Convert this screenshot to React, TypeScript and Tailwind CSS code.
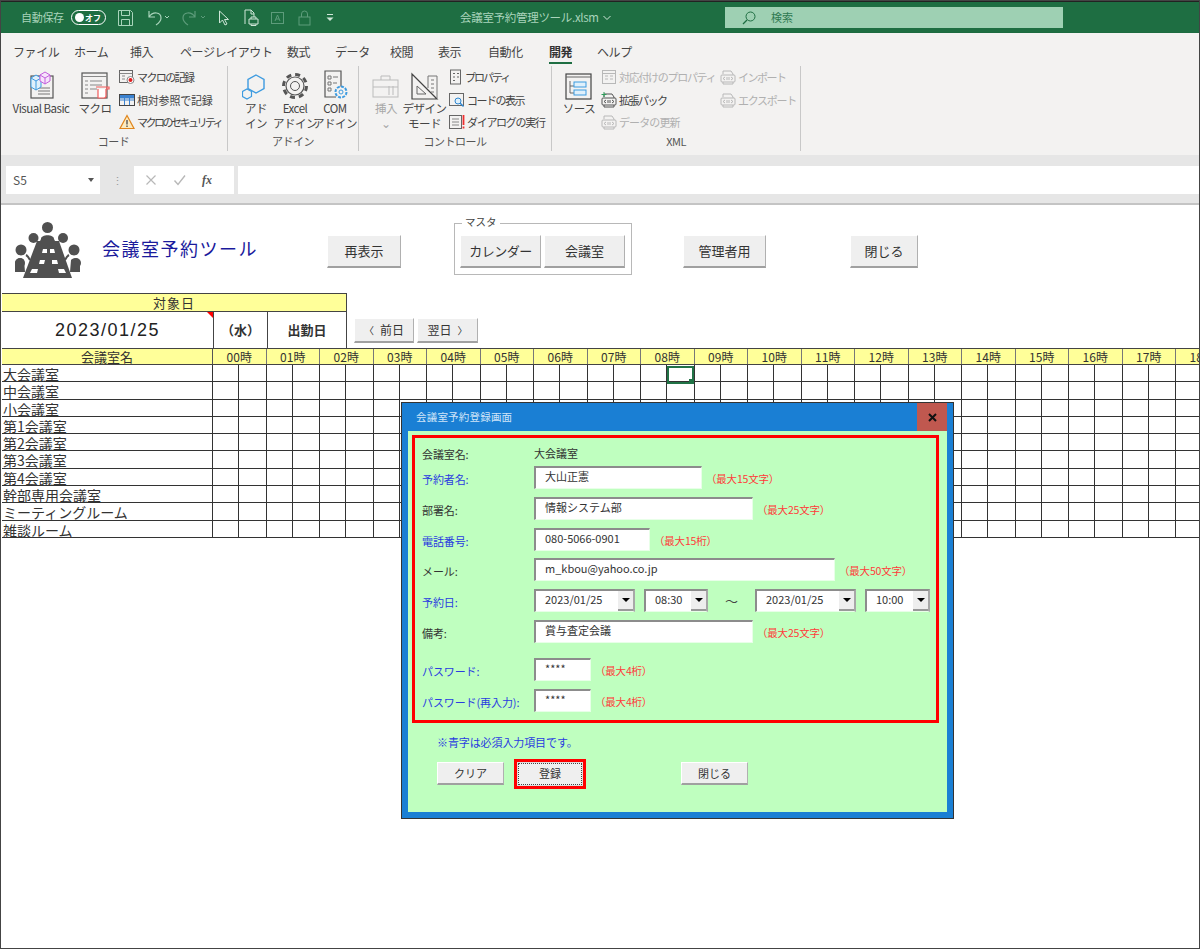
import { ReactNode } from "react";

const rooms = ["大会議室", "中会議室", "小会議室", "第1会議室", "第2会議室", "第3会議室", "第4会議室", "幹部専用会議室", "ミーティングルーム", "雑談ルーム"];
const hours = Array.from({ length: 19 }, (_, i) => String(i).padStart(2, "0") + "時");
const tabs = [
  ["ファイル", "w-[61px]"], ["ホーム", "w-[56px]"], ["挿入", "w-[50px]"], ["ページレイアウト", "w-[107px]"], ["数式", "w-[48px]"],
  ["データ", "w-[55px]"], ["校閲", "w-[48px]"], ["表示", "w-[50px]"], ["自動化", "w-[61px]"], ["開発", "w-[48px]"], ["ヘルプ", "w-[50px]"],
];

function Ico({ w = 28, h = 28, children }: { w?: number; h?: number; children: ReactNode }) {
  return (
    <svg width={w} height={h} viewBox={`0 0 ${w} ${h}`} fill="none" className="shrink-0">
      {children}
    </svg>
  );
}

function LargeBtn({ icon, lines, cls, dim }: { icon: ReactNode; lines: string[]; cls: string; dim?: boolean }) {
  return (
    <div className={`flex flex-col items-center ${cls}`}>
      <div className="flex h-[34px] items-end justify-center">{icon}</div>
      <div className={`mt-[1px] text-center text-[11.5px] leading-[15px] tracking-[-0.5px] whitespace-nowrap ${dim ? "text-[#a8a8a8]" : "text-[#444]"}`}>
        {lines.map((l) => <div key={l}>{l}</div>)}
      </div>
    </div>
  );
}

function SmallBtn({ icon, label, cls = "", dim }: { icon: ReactNode; label: string; cls?: string; dim?: boolean }) {
  return (
    <div className="flex h-[22.5px] items-center gap-[2px]">
      {icon}
      <span className={`text-[11px] whitespace-nowrap ${dim ? "text-[#b0b0b0]" : "text-[#444]"} ${cls}`}>{label}</span>
    </div>
  );
}

function Group({ label, cls, children }: { label: string; cls: string; children: ReactNode }) {
  return (
    <div className={`flex h-[85px] flex-col border-r border-[#c8c8c8] ${cls}`}>
      <div className="flex min-h-0 flex-1">{children}</div>
      <div className="h-[18px] text-center text-[11px] leading-[16px] tracking-[-0.5px] text-[#555]">{label}</div>
    </div>
  );
}

function SheetButton({ children, cls }: { children: ReactNode; cls: string }) {
  return (
    <div className={`flex items-center justify-center border-t border-l border-t-white border-l-white border-b-2 border-r border-b-[#a0a0a0] border-r-[#b0b0b0] bg-[#efefef] text-[#333] ${cls}`}>
      {children}
    </div>
  );
}

function DocIcon({ gray }: { gray?: boolean }) {
  const c = gray ? "#b8b8b8" : "#666";
  return (
    <Ico w={16} h={16}>
      <rect x="1.5" y="1.5" width="13" height="13" stroke={c} />
      <path d="M1.5 4.5h13M4 7h3M4 10h3M9 7h3M9 10h3" stroke={c} />
    </Ico>
  );
}

function XmlIcon({ gray, plus }: { gray?: boolean; plus?: boolean }) {
  const c = gray ? "#b8b8b8" : "#555";
  return (
    <Ico w={16} h={16}>
      <path d="M3 5V2h8l2 3v1M3 13v2h10v-2" stroke={c} />
      <rect x="1" y="6" width="14" height="7" rx="1" stroke={c} />
      <path d="M5 8l-2 1.5L5 11M11 8l2 1.5L11 11M7 8v3M9 8v3" stroke={c} />
      {plus && <path d="M3 0v5M0.5 2.5h5" stroke="#2f9e5b" />}
    </Ico>
  );
}

function RoomLogo() {
  const heads: [number, number, number][] = [[33.5, 5.5, 5.5], [19.5, 16, 5], [49, 16, 5], [7, 28, 5.5], [60, 28, 5.5], [6, 41, 5], [62, 41, 5]];
  return (
    <Ico w={67} h={58}>
      {heads.map(([x, y, r]) => <circle key={x} cx={x} cy={y} r={r} fill="#505050" />)}
      <path d="M1 41c0-4 6-6 9-3l1 12H1zM66 41c0-4-6-6-9-3l-1 12h10z" fill="#505050" />
      <path d="M27 17c0-5 13-5 13 0l1 2H26z" fill="#505050" />
      <path d="M12 33c2 1 3 3 4 5M55 33c-2 1-3 3-4 5" stroke="#505050" strokeWidth="2" />
      <path d="M23 19h22l13 37H9z" fill="#505050" />
      <path d="M29 27h4v4h-5zM36 27h4l1 4h-5zM26 38h5l-1 4h-5zM38 38h5l1 4h-6z" fill="#fff" />
      <path d="M18 47h6l-1 4h-7zM44 47h6l2 4h-7z" fill="#fff" />
    </Ico>
  );
}

function Combo({ value, cls }: { value: string; cls: string }) {
  return (
    <div className={`flex h-[23px] items-stretch border-t-2 border-l-2 border-t-[#8c8c8c] border-l-[#8c8c8c] border-r-2 border-r-[#a8a8a8] border-b border-b-[#e8ffe8] bg-white ${cls}`}>
      <div className="flex-1 pl-[9px] text-[11px] leading-[17px] text-[#333]">{value}</div>
      <div className="flex w-[15px] items-center justify-center border-b-2 border-b-[#999] bg-[#eeeeee]">
        <div className="h-0 w-0 border-x-[4px] border-t-[4px] border-x-transparent border-t-black" />
      </div>
    </div>
  );
}

function Label({ text, required }: { text: string; required?: boolean }) {
  return <div className={`w-[112px] pt-[3px] text-[11px] tracking-[-0.1px] whitespace-nowrap ${required ? "text-[#2a3ce0]" : "text-[#333]"}`}>{text}</div>;
}

function Input({ value, cls }: { value: string; cls: string }) {
  return (
    <div className={`h-[23px] border-t-2 border-l-2 border-t-[#8c8c8c] border-l-[#8c8c8c] border-r border-b border-r-[#e8ffe8] border-b-[#e8ffe8] bg-white pl-[9px] text-[11px] leading-[17px] text-[#333] ${cls}`}>
      {value}
    </div>
  );
}

function Field({ label, value, required, inputCls, hint, rowCls }: { label: string; value: string; required?: boolean; inputCls: string; hint: string; rowCls: string }) {
  return (
    <div className={`flex h-[23px] items-center ${rowCls}`}>
      <Label text={label} required={required} />
      <Input value={value} cls={inputCls} />
      <span className="ml-[4px] pt-[2px] text-[10.5px] tracking-[-0.2px] whitespace-nowrap text-[#ff3a3a]">{hint}</span>
    </div>
  );
}

export default function App() {
  return (
    <div className="relative h-[949px] w-[1200px] overflow-hidden bg-white outline outline-1 -outline-offset-1 outline-[#444] font-['Noto_Sans_CJK_JP','Liberation_Sans',sans-serif]">
      <div className="h-[2px] bg-[#222]" />

      {/* title bar */}
      <div className="flex h-[31px] items-center bg-[#1e6e42] pl-[21px]">
        <span className="w-[50px] text-[11px] tracking-[-0.3px] text-[#a9d4bb]">自動保存</span>
        <div className="flex h-[15px] w-[35px] items-center justify-between rounded-full border border-white pl-[3px] pr-[4px]">
          <div className="h-[9px] w-[9px] rounded-full bg-white" />
          <span className="text-[8px] font-bold text-white">オフ</span>
        </div>
        <div className="ml-[12px] flex items-center">
          <Ico w={15} h={16}>
            <path d="M.5.5h12l2 2v13H.5zM3.5.5v5h8v-5M3.5 15.500v-6h8v6" stroke="#a9d4bb" />
          </Ico>
          <div className="ml-[13px]">
            <Ico w={24} h={16}>
              <path d="M3 1v6h6M3 7c4-6 12-5 12 1 0 3-2 5-5 7" stroke="#a9d4bb" strokeWidth="1.2" />
              <path d="M19 6l2 2 2-2" stroke="#a9d4bb" />
            </Ico>
          </div>
          <div className="ml-[12px]">
            <Ico w={24} h={16}>
              <path d="M13 1v6H7M13 7C9 1 1 2 1 8c0 3 2 5 5 7" stroke="#5d9c7b" strokeWidth="1.2" />
              <path d="M19 6l2 2 2-2" stroke="#5d9c7b" />
            </Ico>
          </div>
          <div className="ml-[12px]">
            <Ico w={12} h={16}>
              <path d="M1.5 1v12l3-3 2.5 5 2-1-2.5-4.5h4z" stroke="#cfe6d8" />
            </Ico>
          </div>
          <div className="ml-[14px]">
            <Ico w={15} h={17}>
              <path d="M1 15V1h6l3 3v4M7 1v4h3" stroke="#cfe6d8" />
              <path d="M5 10h9v5H5zM7 10V8h5v2M7 15v1.5h5V15" stroke="#cfe6d8" fill="#1e6e42" />
            </Ico>
          </div>
          <div className="ml-[11px]">
            <Ico w={15} h={14}>
              <rect x="1.5" y="1.5" width="12" height="11" stroke="#5d9c7b" />
              <path d="M5 10l2.5-6L10 10M6 8h3" stroke="#5d9c7b" />
            </Ico>
          </div>
          <div className="ml-[13px]">
            <Ico w={13} h={16}>
              <rect x="1" y="7" width="11" height="8" stroke="#5d9c7b" />
              <path d="M3.5 7V4a3 3 0 0 1 6 0v3" stroke="#5d9c7b" />
            </Ico>
          </div>
          <div className="ml-[14px]">
            <Ico w={10} h={10}>
              <path d="M2 1.5h6" stroke="#cfe6d8" />
              <path d="M1.5 4.5h7L5 8z" fill="#cfe6d8" />
            </Ico>
          </div>
        </div>
        <div className="ml-[125px] flex w-[147px] items-center gap-[4px] whitespace-nowrap text-[11.5px] tracking-[-0.3px] text-[#a9d4bb]">
          会議室予約管理ツール.xlsm
          <Ico w={8} h={6}><path d="M.5 1L4 4.5 7.5 1" stroke="#cfe6d8" /></Ico>
        </div>
        <div className="ml-[118px] flex h-[21px] w-[338px] items-center bg-[#9ed0b3] pl-[17px]">
          <Ico w={14} h={14}>
            <circle cx="8.5" cy="5.5" r="4.5" stroke="#1e6e42" />
            <path d="M5 9l-4 4" stroke="#1e6e42" strokeWidth="1.2" />
          </Ico>
          <span className="ml-[15px] text-[11px] text-[#2f7a52]">検索</span>
        </div>
      </div>

      {/* ribbon */}
      <div className="h-[122px] bg-[#f3f2f1] shadow-[0_1px_2px_rgba(0,0,0,0.3)]">
        <div className="flex h-[33px] pl-[13px] pt-[5px]">
          {tabs.map(([t, w]) => (
            <div key={t} className={w}>
              <div className={`inline-block h-[22px] text-[12px] leading-[20px] tracking-[-0.4px] whitespace-nowrap ${t === "開発" ? "border-b-2 border-[#1e6e42] font-bold text-[#333]" : "text-[#444]"}`}>{t}</div>
            </div>
          ))}
        </div>
        <div className="flex">
          <Group label="コード" cls="w-[228px]">
            <LargeBtn
              cls="ml-[9px] w-[64px]"
              lines={["Visual Basic"]}
              icon={
                <Ico w={30} h={30}>
                  <rect x="5" y="6" width="22" height="22" stroke="#555" strokeWidth="1.2" />
                  <path d="M12 18h12M12 21h12M12 24h12" stroke="#777" />
                  <path d="M5 8l5-3 5 3v9l-5 3-5-3z" fill="#dff0fb" stroke="#3d9be0" />
                  <path d="M5 8l5 3 5-3M10 11v9" stroke="#3d9be0" />
                  <path d="M14 5l5-3 5 3v6l-5 3-5-3z" fill="#f6e3fb" stroke="#c35fdc" />
                  <path d="M14 5l5 3 5-3M19 8v6" stroke="#c35fdc" />
                </Ico>
              }
            />
            <LargeBtn
              cls="ml-[8px] w-[28px]"
              lines={["マクロ"]}
              icon={
                <Ico w={30} h={30}>
                  <rect x="2" y="3" width="25" height="25" stroke="#555" strokeWidth="1.2" />
                  <path d="M2 6.5h25M5 11h3M10 11h12M5 15h3M10 15h12M5 19h3M10 19h7M5 23h3" stroke="#888" />
                  <path d="M16 17h11v2h2v-2h-2M18 19v9h6c2 0 2-2 2-2v-7" stroke="#f05a5a" fill="#fff" strokeWidth="1.2" />
                </Ico>
              }
            />
            <div className="ml-[10px]">
              <SmallBtn
                cls="tracking-[-1.6px]"
                label="マクロの記録"
                icon={
                  <Ico w={16} h={16}>
                    <rect x=".5" y="1.5" width="13" height="12" stroke="#666" />
                    <path d="M.5 4.500h13M3 7h3M3 10h3" stroke="#888" />
                    <circle cx="11.5" cy="11" r="3.5" fill="#fff" stroke="#888" />
                    <circle cx="11.5" cy="11" r="2" fill="#e02020" />
                  </Ico>
                }
              />
              <SmallBtn
                cls="tracking-[-0.2px]"
                label="相対参照で記録"
                icon={
                  <Ico w={16} h={16}>
                    <rect x=".5" y="2.5" width="15" height="11" stroke="#444" />
                    <path d="M1 3h14v3.500H1z" fill="#3b82d0" />
                    <path d="M1 8h14M5.500 3v10M10.500 3v10" stroke="#3b82d0" />
                  </Ico>
                }
              />
              <SmallBtn
                cls="tracking-[-2.5px]"
                label="マクロのセキュリティ"
                icon={
                  <Ico w={16} h={16}>
                    <path d="M8 1.500l7 13H1z" fill="#fcebc0" stroke="#e0851c" strokeWidth="1.2" />
                    <path d="M8 6v4.500M8 11.500v1.500" stroke="#555" strokeWidth="1.4" />
                  </Ico>
                }
              />
            </div>
          </Group>
          <Group label="アドイン" cls="w-[131px]">
            <LargeBtn
              cls="ml-[17px] w-[22px]"
              lines={["アド", "イン"]}
              icon={
                <Ico w={28} h={28}>
                  <path d="M14 3l8 4.500v9L14 21l-8-4.500v-9z" stroke="#3d9be0" strokeWidth="1.4" />
                  <path d="M5 17l4.500 2.500v5L5 27 .5 24.500v-5z" fill="#f3f2f1" stroke="#3d9be0" strokeWidth="1.2" />
                </Ico>
              }
            />
            <LargeBtn
              cls="ml-[11px] w-[34px]"
              lines={["Excel", "アドイン"]}
              icon={
                <Ico w={28} h={28}>
                  <circle cx="14" cy="14" r="9" stroke="#555" strokeWidth="1.2" />
                  <circle cx="14" cy="14" r="4.5" stroke="#555" />
                  <circle cx="14" cy="14" r="11.5" stroke="#555" strokeWidth="3" strokeDasharray="5 4" />
                </Ico>
              }
            />
            <LargeBtn
              cls="ml-[5px] w-[36px]"
              lines={["COM", "アドイン"]}
              icon={
                <Ico w={28} h={30}>
                  <path d="M20 18V1H4v26h11" stroke="#555" strokeWidth="1.2" />
                  <path d="M7 6h3v3H7zM7 12h3v3H7zM7 18h3v3H7zM12 7h5M12 13h4" stroke="#777" />
                  <circle cx="20" cy="22" r="5.5" fill="#f3f2f1" stroke="#3d9be0" strokeWidth="2" strokeDasharray="3 1.2" />
                  <circle cx="20" cy="22" r="2" stroke="#3d9be0" />
                </Ico>
              }
            />
          </Group>
          <Group label="コントロール" cls="w-[193px]">
            <LargeBtn
              dim
              cls="ml-[14px] w-[26px]"
              lines={["挿入", "⌄"]}
              icon={
                <Ico w={28} h={28}>
                  <rect x="1" y="8" width="25" height="17" stroke="#bbb" />
                  <path d="M9 8V4h9v4M1 15h25M17 14v9M21 14v9" stroke="#bbb" />
                </Ico>
              }
            />
            <LargeBtn
              cls="ml-[6px] w-[39px]"
              lines={["デザイン", "モード"]}
              icon={
                <Ico w={28} h={28}>
                  <path d="M1 2v25h25z" stroke="#444" strokeWidth="1.2" />
                  <path d="M6 14v8h9z" stroke="#666" />
                  <path d="M17 4h9v22M17 4v12M20 8h3M20 12h3M20 16h3M20 20h3" stroke="#777" />
                </Ico>
              }
            />
            <div className="ml-[5px]">
              <SmallBtn
                cls="tracking-[-2px]"
                label="プロパティ"
                icon={
                  <Ico w={14} h={16}>
                    <rect x="1.5" y="1" width="10" height="14" stroke="#666" />
                    <path d="M4 4.500h2M8 4.500h2M4 8h2M8 8h2M4 11.500h2" stroke="#666" />
                  </Ico>
                }
              />
              <SmallBtn
                cls="tracking-[-1.5px]"
                label="コードの表示"
                icon={
                  <Ico w={16} h={16}>
                    <rect x=".5" y="1.5" width="14" height="12" stroke="#666" />
                    <circle cx="9" cy="9" r="3" fill="#dff0fb" stroke="#2f86d0" />
                    <path d="M11 11l3.500 3.500" stroke="#2f86d0" strokeWidth="1.4" />
                  </Ico>
                }
              />
              <SmallBtn
                cls="tracking-[-1.3px]"
                label="ダイアログの実行"
                icon={
                  <Ico w={16} h={16}>
                    <rect x=".5" y="1.5" width="12" height="13" stroke="#666" />
                    <path d="M3 5h7M3 8h7M3 11h7" stroke="#888" />
                    <path d="M14.500 1v10M14.500 12.500v2" stroke="#f03030" strokeWidth="1.8" />
                  </Ico>
                }
              />
            </div>
          </Group>
          <Group label="XML" cls="w-[249px]">
            <LargeBtn
              cls="ml-[13px] w-[28px]"
              lines={["ソース"]}
              icon={
                <Ico w={28} h={28}>
                  <rect x="1" y="2" width="25" height="25" stroke="#444" strokeWidth="1.2" />
                  <path d="M1 5h25M5 9v12h4M5 14h4" stroke="#666" />
                  <rect x="9" y="10" width="12" height="5" fill="#dff0fb" stroke="#3d9be0" />
                  <rect x="9" y="18" width="12" height="5" fill="#dff0fb" stroke="#3d9be0" />
                </Ico>
              }
            />
            <div className="ml-[8px] w-[119px]">
              <SmallBtn dim cls="tracking-[-1.3px]" label="対応付けのプロパティ" icon={<DocIcon gray />} />
              <SmallBtn cls="tracking-[-1.5px]" label="拡張パック" icon={<XmlIcon plus />} />
              <SmallBtn dim cls="tracking-[-0.9px]" label="データの更新" icon={<XmlIcon gray />} />
            </div>
            <div>
              <SmallBtn dim cls="tracking-[-1.5px]" label="インポート" icon={<XmlIcon gray />} />
              <SmallBtn dim cls="tracking-[-1.3px]" label="エクスポート" icon={<XmlIcon gray />} />
            </div>
          </Group>
        </div>
      </div>

      {/* formula bar */}
      <div className="flex h-[50px] items-center border-b-2 border-[#c4c4c4] bg-[#e6e6e6] pl-[6px] pt-[2px]">
        <div className="flex h-[28px] w-[94px] items-center justify-between bg-white pl-[7px] pr-[6px] text-[12px] text-[#555]">
          S5
          <div className="h-0 w-0 border-x-[3.5px] border-t-[4px] border-x-transparent border-t-[#555]" />
        </div>
        <div className="ml-[12px] w-[16px] text-[11px] leading-[6px] text-[#999]">⋮</div>
        <div className="ml-[6px] flex h-[28px] w-[100px] items-center bg-white pl-[11px]">
          <Ico w={12} h={12}><path d="M1.5 1.5l9 9M10.5 1.5l-9 9" stroke="#b8b8b8" strokeWidth="1.2" /></Ico>
          <div className="ml-[16px]">
            <Ico w={14} h={12}><path d="M1.5 6.5l3.500 4 7-9" stroke="#b8b8b8" strokeWidth="1.4" /></Ico>
          </div>
          <span className="ml-[15px] font-['Liberation_Serif',serif] text-[12px] font-bold italic text-[#555]">fx</span>
        </div>
        <div className="ml-[4px] h-[28px] flex-1 bg-white" />
      </div>

      {/* sheet */}
      <div className="flex h-[88px] items-start">
        <div className="ml-[14px] mt-[17px]"><RoomLogo /></div>
        <div className="ml-[21px] mt-[30px] text-[18px] tracking-[1.5px] whitespace-nowrap text-[#1a1a9c]">会議室予約ツール</div>
        <SheetButton cls="ml-[69px] mt-[30px] h-[33px] w-[74px] text-[13px]">再表示</SheetButton>
        <div className="relative ml-[53px] mt-[18px] flex h-[52px] w-[178px] gap-[3px] border border-[#b8b8b8] pl-[5px] pt-[11px]">
          <span className="absolute -top-[9px] left-[7px] bg-white px-[3px] text-[10.5px] leading-[14px] text-[#444]">マスタ</span>
          <SheetButton cls="h-[33px] w-[81px] text-[13px] tracking-[-0.5px]">カレンダー</SheetButton>
          <SheetButton cls="h-[33px] w-[81px] text-[13px]">会議室</SheetButton>
        </div>
        <SheetButton cls="ml-[51px] mt-[30px] h-[33px] w-[83px] text-[13px]">管理者用</SheetButton>
        <SheetButton cls="ml-[84px] mt-[30px] h-[33px] w-[68px] text-[13px]">閉じる</SheetButton>
      </div>

      <div className="flex h-[55px] pl-[2px]">
        <div className="w-[345px] border-t border-r border-[#444]">
          <div className="h-[17px] bg-[#ffff99] text-center text-[13px] leading-[18px] tracking-[1px] text-[#333]">対象日</div>
          <div className="flex h-[37px] border-t border-[#444]">
            <div className="relative flex w-[211px] items-center justify-center font-['Liberation_Sans',sans-serif] text-[18px] tracking-[1.5px] text-[#222]">
              2023/01/25
              <div className="absolute right-0 top-0 h-0 w-0 border-l-[6px] border-t-[6px] border-l-transparent border-t-[#ff0000]" />
            </div>
            <div className="flex w-[54px] items-center justify-center border-l border-[#444] text-[13px] font-bold text-[#333]">（水）</div>
            <div className="flex flex-1 items-center justify-center border-l border-[#444] text-[13px] font-bold text-[#333]">出勤日</div>
          </div>
        </div>
        <div className="ml-[7px] mt-[25px] flex gap-[3px]">
          <SheetButton cls="h-[25px] w-[60px] gap-[6px] text-[12px]"><span className="text-[10px]">〈</span>前日</SheetButton>
          <SheetButton cls="h-[25px] w-[61px] gap-[6px] text-[12px]">翌日<span className="text-[10px]">〉</span></SheetButton>
        </div>
      </div>

      <div className="w-[1229px] pl-[2px]">
        <div className="flex h-[17px] border-y border-[#444] bg-[#ffff99] text-[12px] leading-[15px] text-[#333]">
          <div className="w-[211px] shrink-0 border-r border-[#555] text-center text-[13px]">会議室名</div>
          {hours.map((h) => (
            <div key={h} className="w-[53.5px] shrink-0 border-r border-[#777] text-center">{h}</div>
          ))}
        </div>
        {rooms.map((room) => (
          <div key={room} className="flex h-[17.3px] border-b border-[#333]">
            <div className="w-[211px] shrink-0 border-r border-[#333] pl-[1px] text-[14px] leading-[18px] whitespace-nowrap text-[#333]">{room}</div>
            {hours.map((h) => (
              <div key={h} className="flex w-[53.5px] shrink-0 border-r border-[#333]">
                <div className="w-1/2 border-r border-[#333]" />
              </div>
            ))}
          </div>
        ))}
      </div>

      {/* active cell */}
      <div className="absolute left-[667px] top-[366px] h-[18px] w-[27px] border-2 border-[#217346]">
        <div className="absolute -bottom-[2px] -right-[2px] h-[5px] w-[5px] bg-[#217346]" />
      </div>

      {/* dialog */}
      <div className="absolute left-[401px] top-[402px] flex h-[417px] w-[553px] flex-col border border-[#333] bg-[#1a7fd4] px-[6px] pb-[6px]">
        <div className="flex h-[28px] items-center justify-between">
          <span className="ml-[8px] text-[10.5px] tracking-[0.2px] text-[#cfe4f8]">会議室予約登録画面</span>
          <div className="flex h-[28px] w-[30px] items-center justify-center bg-[#c0584f]">
            <Ico w={9} h={9}><path d="M1 1l7 7M8 1L1 8" stroke="#111" strokeWidth="2" /></Ico>
          </div>
        </div>
        <div className="flex-1 bg-[#bfffbf] p-[4px]">
          <div className="h-[288px] w-[527px] border-[3px] border-[#ff0000] pl-[7px]">
            <div className="flex h-[28px] items-center pt-[2px]">
              <Label text="会議室名:" />
              <span className="pt-[1px] text-[11px] text-[#333]">大会議室</span>
            </div>
            <Field rowCls="" required label="予約者名:" value="大山正憲" inputCls="w-[168px]" hint="（最大15文字）" />
            <Field rowCls="mt-[8px]" label="部署名:" value="情報システム部" inputCls="w-[219px]" hint="（最大25文字）" />
            <Field rowCls="mt-[8px]" required label="電話番号:" value="080-5066-0901" inputCls="w-[116px]" hint="（最大15桁）" />
            <Field rowCls="mt-[7px]" label="メール:" value="m_kbou@yahoo.co.jp" inputCls="w-[301px]" hint="（最大50文字）" />
            <div className="mt-[8px] flex h-[23px] items-center">
              <Label text="予約日:" required />
              <Combo value="2023/01/25" cls="w-[101px]" />
              <Combo value="08:30" cls="ml-[9px] w-[64px]" />
              <span className="w-[47px] text-center text-[13px] text-[#444]">～</span>
              <Combo value="2023/01/25" cls="w-[101px]" />
              <Combo value="10:00" cls="ml-[9px] w-[65px]" />
            </div>
            <Field rowCls="mt-[8px]" label="備考:" value="賞与査定会議" inputCls="w-[219px]" hint="（最大25文字）" />
            <Field rowCls="mt-[15px]" required label="パスワード:" value="****" inputCls="w-[57px]" hint="（最大4桁）" />
            <Field rowCls="mt-[8px]" required label="パスワード(再入力):" value="****" inputCls="w-[57px]" hint="（最大4桁）" />
          </div>
          <div className="ml-[25px] mt-[11px] text-[11px] tracking-[-0.1px] text-[#2a3ce0]">※青字は必須入力項目です。</div>
          <div className="ml-[25px] mt-[8px] flex items-center">
            <SheetButton cls="h-[23px] w-[67px] text-[11px]">クリア</SheetButton>
            <div className="ml-[10px] border-[3px] border-[#ff0000] bg-[#ddd] p-[1px]">
              <div className="flex h-[22px] w-[64px] items-center justify-center border border-dotted border-[#444] bg-[#efefef] text-[11px] text-[#333]">登録</div>
            </div>
            <SheetButton cls="ml-[95px] h-[23px] w-[67px] text-[11px]">閉じる</SheetButton>
          </div>
        </div>
      </div>
    </div>
  );
}
